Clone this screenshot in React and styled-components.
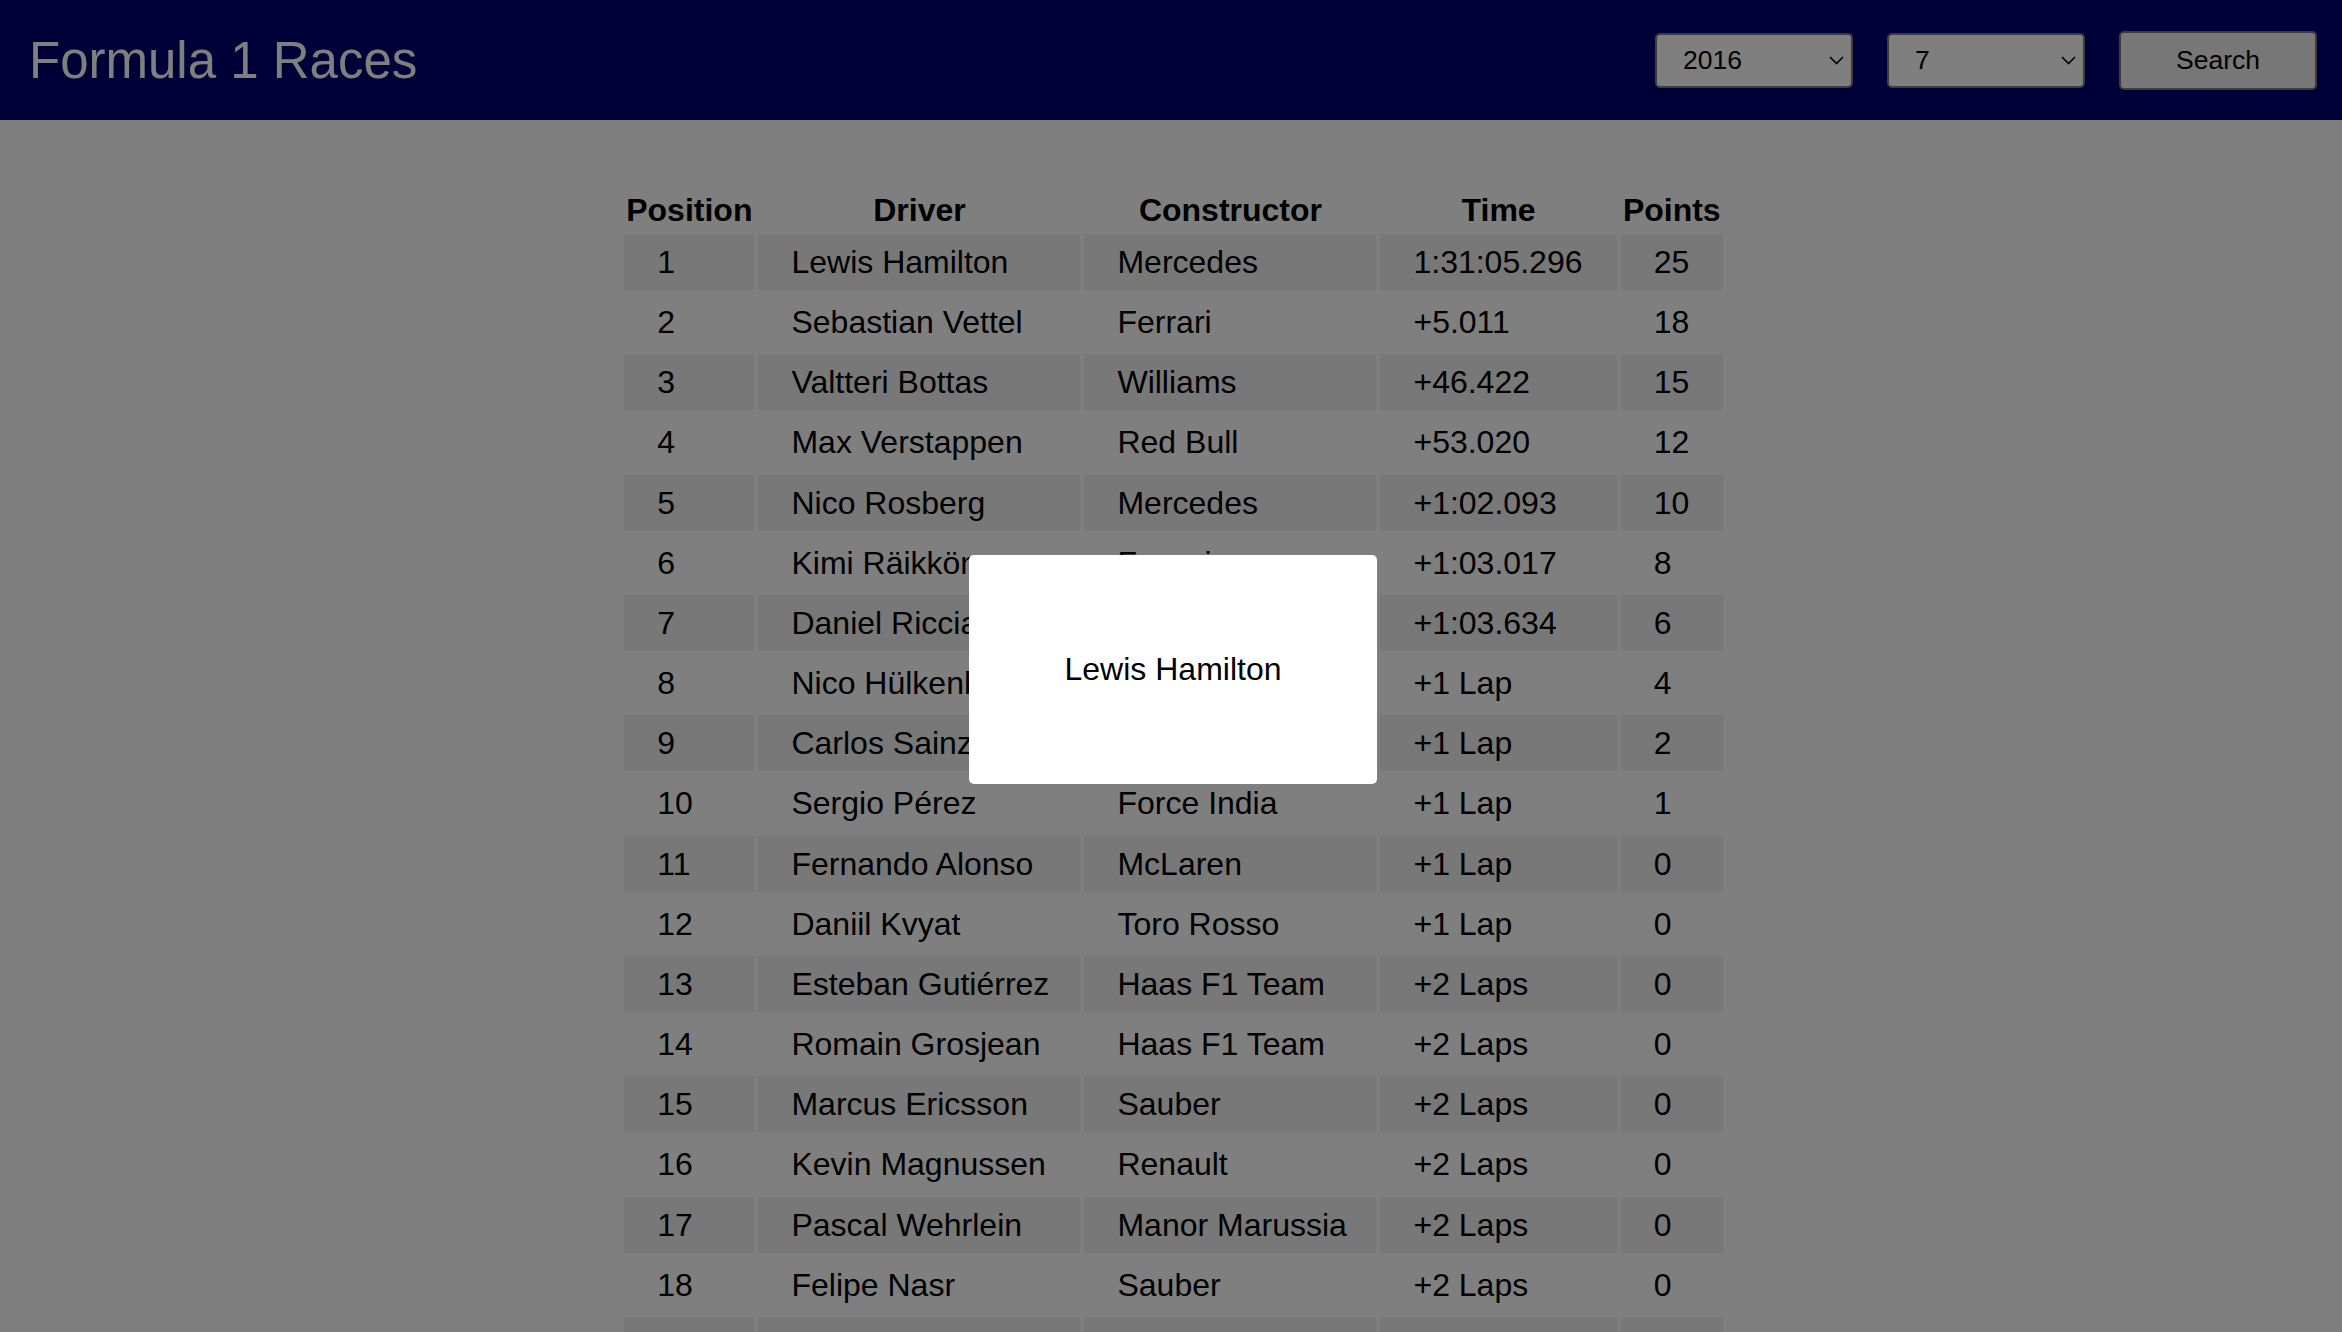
import styled, { createGlobalStyle } from "styled-components";

const GlobalStyle = createGlobalStyle`
  html, body {
    margin: 0;
    padding: 0;
    background: #ffffff;
    font-family: "Liberation Sans", Arial, sans-serif;
    overflow: hidden;
  }
`;

const results = [
  ["1", "Lewis Hamilton", "Mercedes", "1:31:05.296", "25"],
  ["2", "Sebastian Vettel", "Ferrari", "+5.011", "18"],
  ["3", "Valtteri Bottas", "Williams", "+46.422", "15"],
  ["4", "Max Verstappen", "Red Bull", "+53.020", "12"],
  ["5", "Nico Rosberg", "Mercedes", "+1:02.093", "10"],
  ["6", "Kimi Räikkönen", "Ferrari", "+1:03.017", "8"],
  ["7", "Daniel Ricciardo", "Red Bull", "+1:03.634", "6"],
  ["8", "Nico Hülkenberg", "Force India", "+1 Lap", "4"],
  ["9", "Carlos Sainz", "Toro Rosso", "+1 Lap", "2"],
  ["10", "Sergio Pérez", "Force India", "+1 Lap", "1"],
  ["11", "Fernando Alonso", "McLaren", "+1 Lap", "0"],
  ["12", "Daniil Kvyat", "Toro Rosso", "+1 Lap", "0"],
  ["13", "Esteban Gutiérrez", "Haas F1 Team", "+2 Laps", "0"],
  ["14", "Romain Grosjean", "Haas F1 Team", "+2 Laps", "0"],
  ["15", "Marcus Ericsson", "Sauber", "+2 Laps", "0"],
  ["16", "Kevin Magnussen", "Renault", "+2 Laps", "0"],
  ["17", "Pascal Wehrlein", "Manor Marussia", "+2 Laps", "0"],
  ["18", "Felipe Nasr", "Sauber", "+2 Laps", "0"],
  ["19", "Rio Haryanto", "Manor Marussia", "+2 Laps", "0"],
  ["20", "Jolyon Palmer", "Renault", "Water leak", "0"],
  ["21", "Felipe Massa", "Williams", "Overheating", "0"],
  ["22", "Jenson Button", "McLaren", "Engine", "0"],
];

const columns = [
  { label: "Position", width: 130 },
  { label: "Driver", width: 322 },
  { label: "Constructor", width: 292 },
  { label: "Time", width: 233 },
  { label: "Points", width: 102 },
];

const Header = styled.header`
  height: 120px;
  background: #000070;
  display: flex;
  align-items: center;
  justify-content: space-between;
  padding: 0 25px 0 29px;
`;

const Title = styled.h1`
  margin: 0;
  font-size: 51px;
  font-weight: normal;
  color: #ffffff;
`;

const Controls = styled.div`
  display: flex;
  align-items: center;
  gap: 34px;
`;

const SelectWrap = styled.div`
  position: relative;
  width: 198px;
  height: 55px;
`;

const Select = styled.select`
  appearance: none;
  box-sizing: border-box;
  width: 100%;
  height: 100%;
  margin: 0;
  padding: 0 0 0 26px;
  background: #ffffff;
  border: 2px solid #787878;
  border-radius: 5px;
  font-family: inherit;
  font-size: 26.5px;
  color: #000000;
`;

const Chevron = styled.svg`
  position: absolute;
  right: 9px;
  top: 23px;
  width: 15px;
  height: 9px;
  pointer-events: none;
`;

const SearchButton = styled.button`
  box-sizing: border-box;
  width: 198px;
  height: 59px;
  background: #efefef;
  border: 2px solid #787878;
  border-radius: 5px;
  font-family: inherit;
  font-size: 26.5px;
  color: #000000;
`;

const Main = styled.main`
  display: flex;
  justify-content: center;
  padding: 66px 0 0 5px;
`;

const Table = styled.table`
  border-spacing: 4px;
  font-size: 32px;
  color: #000000;
`;

const Th = styled.th`
  box-sizing: border-box;
  width: ${(p) => p.$width}px;
  padding: 2px;
  line-height: 36px;
  font-weight: bold;
  text-align: center;
`;

const Row = styled.tr`
  background: ${(p) => (p.$shaded ? "#f0f0f0" : "transparent")};
`;

const Td = styled.td`
  padding: 10px 29px 10px 33px;
  line-height: 36.15px;
  white-space: nowrap;
  text-align: left;
`;

const Backdrop = styled.div`
  position: fixed;
  inset: 0;
  background: rgba(0, 0, 0, 0.5);
  display: flex;
  align-items: center;
  justify-content: center;
`;

const Modal = styled.div`
  width: 408px;
  height: 229px;
  margin-left: 4px;
  margin-top: 6px;
  background: #ffffff;
  border-radius: 5px;
  display: flex;
  align-items: center;
  justify-content: center;
  font-size: 32px;
  color: #000000;
`;

const Dropdown = ({ value, options }) => (
  <SelectWrap>
    <Select defaultValue={value}>
      {options.map((o) => (
        <option key={o}>{o}</option>
      ))}
    </Select>
    <Chevron viewBox="0 0 15 9">
      <path d="M1 1 L7.5 7.5 L14 1" fill="none" stroke="#000" strokeWidth="1.6" />
    </Chevron>
  </SelectWrap>
);

export default function App() {
  return (
    <>
      <GlobalStyle />
      <Header>
        <Title>Formula 1 Races</Title>
        <Controls>
          <Dropdown value="2016" options={["2014", "2015", "2016", "2017"]} />
          <Dropdown value="7" options={["1", "2", "3", "4", "5", "6", "7", "8"]} />
          <SearchButton>Search</SearchButton>
        </Controls>
      </Header>
      <Main>
        <Table>
          <thead>
            <tr>
              {columns.map((c) => (
                <Th key={c.label} $width={c.width}>
                  {c.label}
                </Th>
              ))}
            </tr>
          </thead>
          <tbody>
            {results.map((r, i) => (
              <Row key={r[0]} $shaded={i % 2 === 0}>
                {r.map((cell, j) => (
                  <Td key={j}>{cell}</Td>
                ))}
              </Row>
            ))}
          </tbody>
        </Table>
      </Main>
      <Backdrop>
        <Modal>Lewis Hamilton</Modal>
      </Backdrop>
    </>
  );
}
